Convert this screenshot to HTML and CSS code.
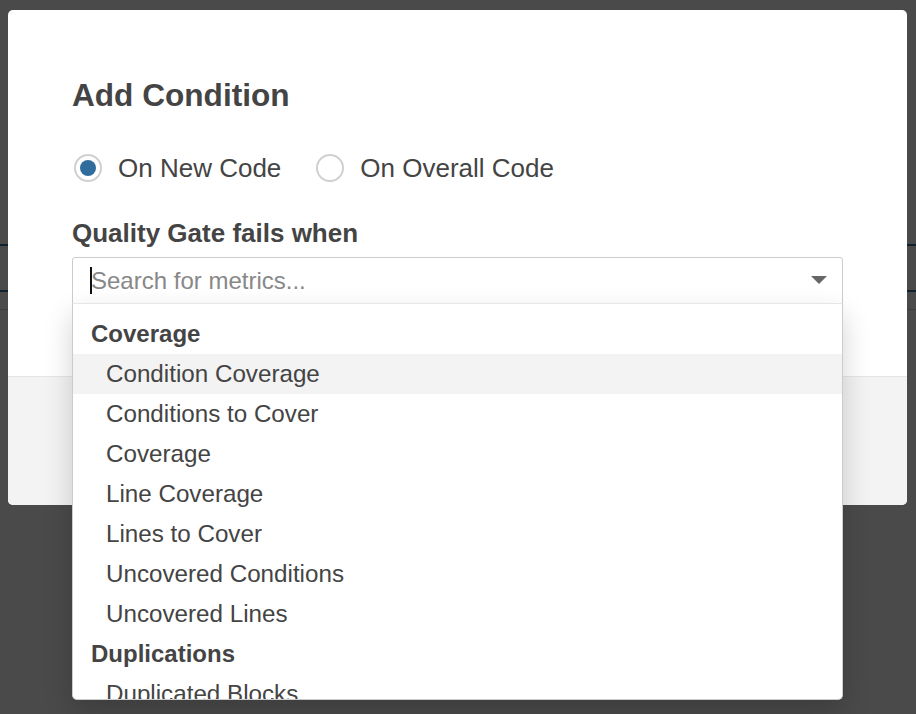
FILE: index.html
```html
<!DOCTYPE html>
<html>
<head>
<meta charset="utf-8">
<link rel="stylesheet" href="styles.css">
</head>
<body>
<div class="page">
  <div class="page-gap-a"></div>
  <div class="page-line blue"></div>
  <div class="page-gap-b"></div>
  <div class="page-line blue"></div>
  <div class="page-gap-c"></div>
  <div class="page-line grey"></div>
</div>
<div class="overlay"></div>
<div class="modal">
  <div class="modal-body">
    <h2 class="title">Add Condition</h2>
    <div class="radios">
      <label class="radio"><span class="radio-dot checked"></span><span>On New Code</span></label>
      <label class="radio"><span class="radio-dot"></span><span>On Overall Code</span></label>
    </div>
    <div class="field-label">Quality Gate fails when</div>
    <div class="select">
      <div class="control">
        <span class="caret-cursor"></span>
        <span class="placeholder">Search for metrics...</span>
        <svg class="arrow" width="16" height="9" viewBox="0 0 16 9"><path d="M0 0 L16 0 L8 8 Z" fill="#666"/></svg>
      </div>
      <div class="menu">
        <div class="group">Coverage</div>
        <div class="option active">Condition Coverage</div>
        <div class="option">Conditions to Cover</div>
        <div class="option">Coverage</div>
        <div class="option">Line Coverage</div>
        <div class="option">Lines to Cover</div>
        <div class="option">Uncovered Conditions</div>
        <div class="option">Uncovered Lines</div>
        <div class="group">Duplications</div>
        <div class="option">Duplicated Blocks</div>
      </div>
    </div>
  </div>
  <div class="modal-footer"></div>
</div>
</body>
</html>
```

FILE: styles.css
```css
html, body {
  margin: 0;
  padding: 0;
  width: 916px;
  height: 714px;
  overflow: hidden;
  font-family: "Liberation Sans", Arial, Helvetica, sans-serif;
  color: #444;
  background: #fff;
}

.page {
  width: 916px;
  height: 714px;
  background: #fff;
  display: flex;
  flex-direction: column;
}
.page-gap-a { height: 244px; }
.page-gap-b { height: 44px; }
.page-gap-c { height: 17px; }
.page-line { height: 2px; }
.page-line.blue { background: #3d6e9c; }
.page-line.grey { background: #d8d8d8; height: 1px; }

.overlay {
  position: absolute;
  left: 0;
  top: 0;
  width: 916px;
  height: 714px;
  background: rgba(0, 0, 0, 0.71);
}

.modal {
  position: absolute;
  left: 8px;
  top: 10px;
  width: 899px;
  height: 495px;
  background: #fff;
  border-radius: 5px;
  display: flex;
  flex-direction: column;
}

.modal-body {
  padding: 65px 64px 0 64px;
  display: flex;
  flex-direction: column;
}

.title {
  margin: 0;
  font-size: 31.6px;
  line-height: 40px;
  font-weight: bold;
  color: #444;
}

.radios {
  margin-top: 33px;
  display: flex;
  align-items: center;
  gap: 33px;
  height: 40px;
}

.radio {
  display: flex;
  align-items: center;
  gap: 16px;
  font-size: 26px;
  line-height: 40px;
  color: #444;
}

.radio-dot {
  width: 28px;
  height: 28px;
  box-sizing: border-box;
  border: 2px solid #d0d0d0;
  border-radius: 50%;
  margin-left: 2px;
  display: flex;
  align-items: center;
  justify-content: center;
}
.radio-dot.checked::after {
  content: "";
  width: 16px;
  height: 16px;
  border-radius: 50%;
  background: #316d9c;
}

.field-label {
  margin-top: 29px;
  font-size: 26px;
  line-height: 32px;
  font-weight: bold;
  color: #444;
}

.select {
  margin-top: 8px;
  position: relative;
  width: 771px;
}

.control {
  box-sizing: border-box;
  height: 47px;
  border: 1px solid #ccc;
  border-radius: 3px 3px 0 0;
  background: #fff;
  display: flex;
  align-items: center;
  padding: 0 16px 0 17px;
}

.caret-cursor {
  width: 2px;
  height: 27px;
  background: #111;
}

.placeholder {
  flex: 1;
  font-size: 24px;
  color: #888;
  margin-left: -1px;
}

.arrow {
  margin-right: -1px;
}

.menu {
  position: absolute;
  left: 0;
  top: 46px;
  width: 771px;
  height: 397px;
  box-sizing: border-box;
  border: 1px solid #ccc;
  border-top-color: #e6e6e6;
  border-radius: 0 0 5px 5px;
  background: #fff;
  overflow: hidden;
  padding-top: 10px;
  box-shadow: 0 12px 28px rgba(0, 0, 0, 0.18);
}

.group {
  height: 40px;
  line-height: 40px;
  padding-left: 18px;
  font-size: 24px;
  font-weight: bold;
  color: #444;
}

.option {
  height: 40px;
  line-height: 40px;
  padding-left: 33px;
  font-size: 24.2px;
  color: #444;
}
.option.active {
  background: #f3f3f3;
}

.modal-footer {
  margin-top: auto;
  height: 128px;
  border-top: 1px solid #e6e6e6;
  background: #f3f3f3;
  border-radius: 0 0 5px 5px;
}
```
